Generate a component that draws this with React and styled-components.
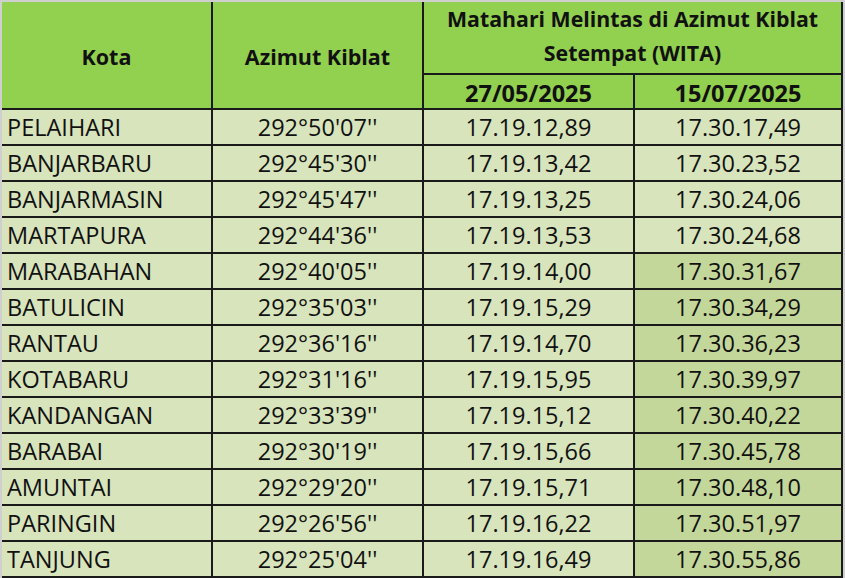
import React from 'react';
import styled, { createGlobalStyle } from 'styled-components';

const GlobalStyle = createGlobalStyle`
  html, body {
    margin: 0;
    padding: 0;
    background: #ffffff;
  }
  body {
    font-family: "Open Sans", "Liberation Sans", sans-serif;
  }
`;

const rows = [
  ['PELAIHARI', "292°50'07''", '17.19.12,89', '17.30.17,49', false],
  ['BANJARBARU', "292°45'30''", '17.19.13,42', '17.30.23,52', false],
  ['BANJARMASIN', "292°45'47''", '17.19.13,25', '17.30.24,06', false],
  ['MARTAPURA', "292°44'36''", '17.19.13,53', '17.30.24,68', false],
  ['MARABAHAN', "292°40'05''", '17.19.14,00', '17.30.31,67', true],
  ['BATULICIN', "292°35'03''", '17.19.15,29', '17.30.34,29', true],
  ['RANTAU', "292°36'16''", '17.19.14,70', '17.30.36,23', true],
  ['KOTABARU', "292°31'16''", '17.19.15,95', '17.30.39,97', true],
  ['KANDANGAN', "292°33'39''", '17.19.15,12', '17.30.40,22', true],
  ['BARABAI', "292°30'19''", '17.19.15,66', '17.30.45,78', true],
  ['AMUNTAI', "292°29'20''", '17.19.15,71', '17.30.48,10', true],
  ['PARINGIN', "292°26'56''", '17.19.16,22', '17.30.51,97', true],
  ['TANJUNG', "292°25'04''", '17.19.16,49', '17.30.55,86', true],
];

const App = () => {
  return (
    <>
      <GlobalStyle />
      <StFrame>
        <StTable>
          <StHead className="span-rows">Kota</StHead>
          <StHead className="span-rows">Azimut Kiblat</StHead>
          <StHead className="span-cols">
            Matahari Melintas di Azimut Kiblat
            <br />
            Setempat (WITA)
          </StHead>
          <StHead className="date">27/05/2025</StHead>
          <StHead className="date">15/07/2025</StHead>

          {rows.map(([kota, azimut, t1, t2, mark]) => (
            <React.Fragment key={kota}>
              <StCell align="left">{kota}</StCell>
              <StCell>{azimut}</StCell>
              <StCell>{t1}</StCell>
              <StCell marked={mark}>{t2}</StCell>
            </React.Fragment>
          ))}
        </StTable>
      </StFrame>
    </>
  );
};

export default App;


const StFrame = styled.div`
  width: 845px;
  height: 578px;
  box-sizing: border-box;
  border-top: 2px solid #cfcfcf;
  border-left: 2px solid #cfcfcf;
  border-right: 2px solid #cfcfcf;
  overflow: hidden;
`;

const StTable = styled.div`
  display: grid;
  grid-template-columns: 209px 209px 209px 206px;
  grid-template-rows: 71px 33px repeat(13, 34px);
  gap: 2px;
  padding: 0 2px 2px 0;
  background-color: #1a1a1a;
  width: fit-content;

  .span-rows {
    grid-row: span 2;
    font-size: 21.5px;
    padding-top: 2px;
  }
  .span-cols {
    grid-column: span 2;
    line-height: 34px;
    font-size: 21.3px;
    padding-bottom: 3px;
  }
  .date {
    font-size: 23.5px;
    padding-top: 2px;
  }
`;

const StHead = styled.div`
  display: flex;
  align-items: center;
  justify-content: center;
  text-align: center;
  background-color: #92d050;
  color: #111;
  font-weight: 700;
`;

const StCell = styled.div.withConfig({
  shouldForwardProp: (prop) => !['marked', 'align'].includes(prop),
})`
  display: flex;
  align-items: center;
  justify-content: ${({ align }) => (align === 'left' ? 'flex-start' : 'center')};
  padding-left: ${({ align }) => (align === 'left' ? '5px' : '0')};
  padding-top: 2px;
  background-color: ${({ marked }) => (marked ? '#c4d79b' : '#d8e4bc')};
  color: #111;
  font-size: 23.5px;
  line-height: 1;
`;
